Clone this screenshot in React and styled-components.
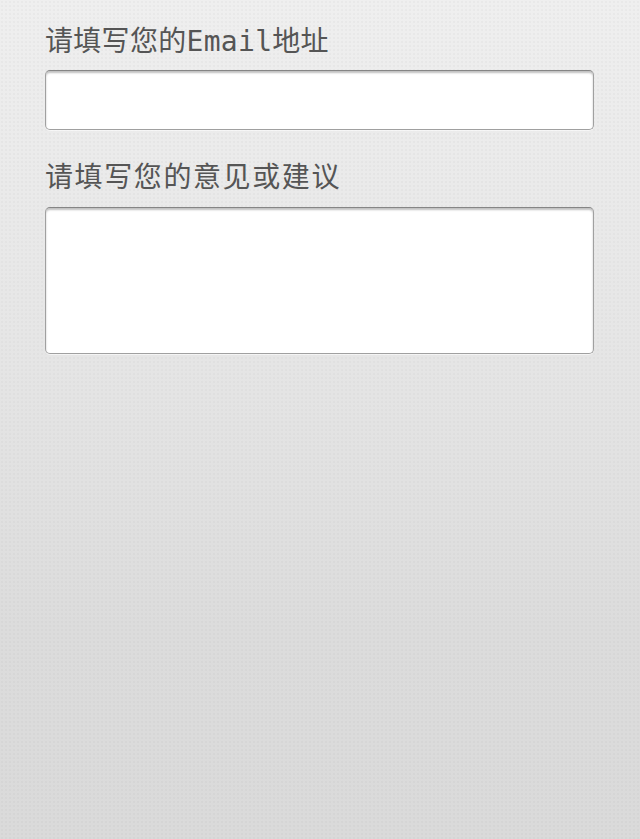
import React from 'react';
import styled, { createGlobalStyle } from 'styled-components';

const GlobalStyle = createGlobalStyle`
  html, body {
    margin: 0;
    padding: 0;
  }
  body {
    min-height: 839px;
    background-color: #e2e2e2;
    background-image:
      radial-gradient(rgba(0, 0, 0, 0.025) 1px, transparent 1px),
      linear-gradient(to bottom, #efefef 0%, #e6e6e6 40%, #dcdcdc 75%, #dadada 100%);
    background-size: 4px 4px, 100% 839px;
    font-family: "DejaVu Sans Mono", "Noto Sans CJK SC", sans-serif;
  }
`;

const Form = styled.form`
  display: flex;
  flex-direction: column;
  padding: 24px 46px 0 45px;
`;

const Label = styled.label`
  display: block;
  font-size: 28px;
  line-height: 36px;
  color: #555;
  letter-spacing: ${props => props.spacing || 0}px;
  margin-bottom: ${props => props.gap}px;
`;

const Field = styled.div`
  box-sizing: border-box;
  height: ${props => props.height}px;
  background: #fff;
  border: 1px solid #a0a0a0;
  border-top-color: #858585;
  border-radius: 5px;
  box-shadow: inset 0 2px 2px rgba(0, 0, 0, 0.25), 0 1px 0 rgba(255, 255, 255, 0.6);
  margin-bottom: ${props => props.after}px;
`;

const Input = styled.input`
  box-sizing: border-box;
  width: 100%;
  height: 100%;
  border: none;
  outline: none;
  background: transparent;
  font: inherit;
  font-size: 24px;
  padding: 0 10px;
`;

const TextArea = styled.textarea`
  box-sizing: border-box;
  width: 100%;
  height: 100%;
  border: none;
  outline: none;
  background: transparent;
  resize: none;
  font: inherit;
  font-size: 24px;
  padding: 10px;
`;

export default function App() {
  return (
    <>
      <GlobalStyle />
      <Form>
        <Label gap={10} spacing={0.3}>请填写您的Email地址</Label>
        <Field height={60} after={30}>
          <Input type="email" />
        </Field>
        <Label gap={11} spacing={1.6}>请填写您的意见或建议</Label>
        <Field height={147} after={0}>
          <TextArea />
        </Field>
      </Form>
    </>
  );
}
